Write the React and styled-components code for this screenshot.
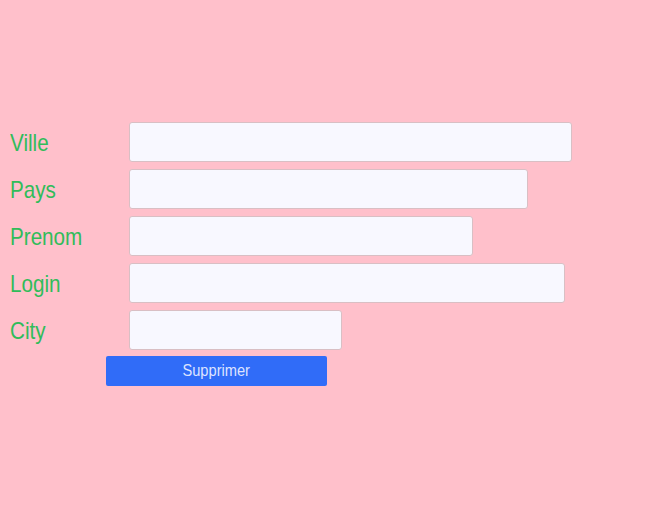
import React from "react";
import styled, { createGlobalStyle } from "styled-components";

const Global = createGlobalStyle`
  html, body {
    margin: 0;
    padding: 0;
    background: #ffc0cb;
    font-family: "Liberation Sans", Arial, sans-serif;
  }
`;

const Page = styled.div`
  width: 668px;
  height: 525px;
  background: #ffc0cb;
  padding-top: 122px;
  box-sizing: border-box;
`;

const Form = styled.form`
  display: flex;
  flex-direction: column;
  gap: 7px;
`;

const Row = styled.div`
  display: flex;
  align-items: center;
  height: 40px;
`;

const Label = styled.label`
  width: 119px;
  padding-left: 10px;
  padding-top: 2px;
  color: #30bc5a;
  font-size: 24px;
  line-height: 28px;
`;

/* the glyphs in the shot are a bit condensed */
const Squeeze = styled.span`
  display: inline-block;
  transform: scaleX(0.86);
  transform-origin: ${(p) => (p.center ? "center" : "left")} center;
  white-space: nowrap;
`;

const Field = styled.input`
  width: ${(p) => p.w}px;
  height: 40px;
  box-sizing: border-box;
  margin: 0;
  background: #f8f8ff;
  border: 1px solid #d9bfc4;
  border-radius: 3px;
  outline: none;
`;

const Button = styled.button`
  margin: 6px 0 0 106px;
  width: 221px;
  height: 30px;
  border: none;
  border-radius: 2px;
  background: #306cf8;
  color: #dde3ff;
  font-family: "Liberation Sans", Arial, sans-serif;
  font-size: 17px;
  padding: 0;
`;

const fields = [
  { label: "Ville", w: 443 },
  { label: "Pays", w: 399 },
  { label: "Prenom", w: 344 },
  { label: "Login", w: 436 },
  { label: "City", w: 213 },
];

export default function App() {
  return (
    <Page>
      <Global />
      <Form onSubmit={(e) => e.preventDefault()}>
        {fields.map((f) => (
          <Row key={f.label}>
            <Label>
              <Squeeze>{f.label}</Squeeze>
            </Label>
            <Field w={f.w} />
          </Row>
        ))}
      </Form>
      <Button type="button">
        <Squeeze center>Supprimer</Squeeze>
      </Button>
    </Page>
  );
}
